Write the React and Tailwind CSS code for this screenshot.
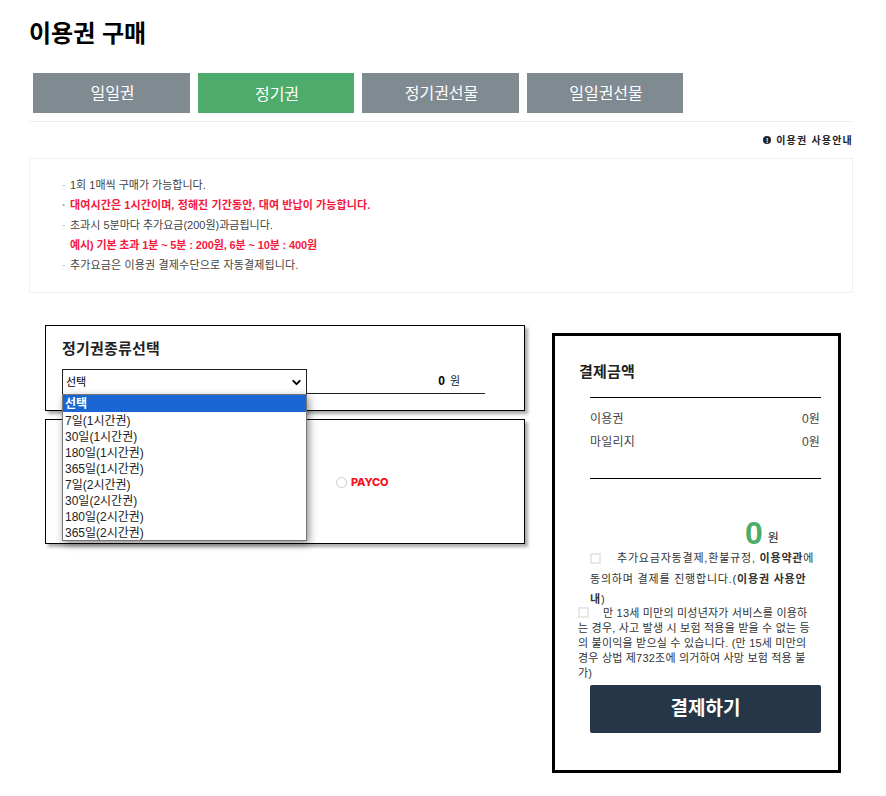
import React from "react";
import { ChevronDown } from "lucide-react";

const tabs = [
  { name: "일일권", w: "w-[157px]" },
  { name: "정기권", w: "w-[156px]", active: true },
  { name: "정기권선물", w: "w-[157px]" },
  { name: "일일권선물", w: "w-[156px]" },
];

const options = [
  "7일(1시간권)",
  "30일(1시간권)",
  "180일(1시간권)",
  "365일(1시간권)",
  "7일(2시간권)",
  "30일(2시간권)",
  "180일(2시간권)",
  "365일(2시간권)",
];

const App = () => {
  return (
    <div className="w-[886px] h-[796px] bg-white overflow-hidden pl-[29px] pr-[33px] font-['Liberation_Sans','Noto_Sans_CJK_KR',sans-serif] text-[#333]">
      {/* Title */}
      <h1 className="pt-[18px] h-[73px] text-[24px] leading-[32px] font-bold text-black">이용권 구매</h1>

      {/* Tabs */}
      <div className="flex gap-2 pl-1 h-[48px] border-b border-[#eee] box-content">
        {tabs.map(tab => (
          <div
            key={tab.name}
            className={`${tab.w} h-10 pl-[2px] flex items-center justify-center text-[16px] text-white ${
              tab.active ? "bg-[#4dab6b] pt-[4px]" : "bg-[#808a91] pt-[2px]"
            }`}
          >
            {tab.name}
          </div>
        ))}
      </div>

      {/* Guide link */}
      <div className="h-[36px] flex items-center justify-end gap-[5px] text-[10px] font-bold text-[#222] tracking-[1.2px]">
        <span className="w-2 h-2 rounded-full bg-[#222] flex items-center justify-center text-white text-[7px] leading-none tracking-normal">!</span>
        이용권 사용안내
      </div>

      {/* Notice */}
      <div className="h-[135px] border border-[#f0f0f0] pt-4 pl-[32px] text-[11px] leading-[20px] text-[#444]">
        <p className="h-5"><span className="inline-block w-2 text-[#999]">·</span>1회 1매씩 구매가 가능합니다.</p>
        <p className="h-5 font-bold tracking-[0.1px] text-[#f5173c]"><span className="inline-block w-2 text-[#999]">·</span>대여시간은 1시간이며, 정해진 기간동안, 대여 반납이 가능합니다.</p>
        <p className="h-5"><span className="inline-block w-2 text-[#999]">·</span>초과시 5분마다 추가요금(200원)과금됩니다.</p>
        <p className="h-5 pl-2 font-bold tracking-[-0.13px] text-[#f5173c]">예시) 기본 초과 1분 ~ 5분 : 200원, 6분 ~ 10분 : 400원</p>
        <p className="h-5 tracking-[0.15px]"><span className="inline-block w-2 text-[#999]">·</span>추가요금은 이용권 결제수단으로 자동결제됩니다.</p>
      </div>

      <div className="flex items-start">
        {/* Left column */}
        <div className="relative w-[480px] ml-4 mt-8 shrink-0">
          <div className="h-[86px] border border-black shadow-[3px_3px_3px_#aaa] pt-[13px] pl-4">
            <h2 className="text-[15px] leading-5 font-bold tracking-[0.2px] text-[#222]">정기권종류선택</h2>
            <div className="flex items-start mt-[10px]">
              <div className="w-[245px] h-[26px] border border-[#222] flex items-center justify-between pl-[3px] pr-[3px] text-[11px] text-black">
                선택
                <ChevronDown className="w-[13px] h-[13px]" strokeWidth={3.5} color="#000" />
              </div>
              <div className="w-[178px] h-[25px] border-b border-[#222] flex items-center justify-end pr-[25px] gap-[5px] text-[11px] text-[#222]">
                <b className="text-[12px] text-black">0</b> 원
              </div>
            </div>
          </div>

          <div className="h-[125px] mt-2 border border-black shadow-[3px_3px_3px_#aaa] flex items-center pl-[290px] pt-[2px]">
            <span className="w-[11px] h-[11px] rounded-full border border-[#ccc] mr-1" />
            <span className="font-['Inter',sans-serif] text-[11px] font-extrabold tracking-[-0.2px] text-[#f5141e]">PAYCO</span>
          </div>

          {/* Open select list */}
          <div className="absolute left-[17px] top-[69px] w-[245px] h-[147px] bg-white border border-[#767676] shadow-[2px_3px_8px_rgba(0,0,0,0.45)] text-[12px] leading-[16px] text-[#222]">
            <div className="h-[17px] pl-[2px] pt-px bg-[#1a66d4] text-white font-bold">선택</div>
            {options.map(opt => (
              <div key={opt} className="h-4 pl-[2px] pt-px whitespace-nowrap">{opt}</div>
            ))}
          </div>
        </div>

        {/* Payment box */}
        <div className="w-[289px] h-[440px] ml-[27px] mt-10 border-[3px] border-black shrink-0 pl-[24px] pr-[17px] pt-[26px] text-[#444]">
          <h2 className="text-[15px] leading-5 font-bold tracking-[0.2px] text-[#222]">결제금액</h2>
          <div className="ml-[11px] mt-[15px] h-[81px] border-t border-black pt-[11px] text-[12px] tracking-[0.2px]">
            <div className="flex justify-between h-[23px] leading-[20px]"><span>이용권</span><span className="pr-px">0원</span></div>
            <div className="flex justify-between h-[23px] leading-[20px]"><span>마일리지</span><span className="pr-px">0원</span></div>
          </div>
          <div className="ml-[11px] border-t border-black h-[72px] flex items-end pl-[155px] gap-[5px]">
            <b className="text-[32px] leading-[34px] text-[#4dab6b]">0</b>
            <span className="text-[12px] leading-[20px] mb-[2px] text-[#222]">원</span>
          </div>
          <div className="relative ml-[11px] mr-[5px] -mt-[2px] h-[58px] text-[11px] leading-[20.5px] text-[#333] tracking-[0.8px]">
            <span className="absolute left-0 top-[5px] w-[11px] h-[11px] border-2 border-[#e8e8e8]" />
            <p className="indent-[27px]">추가요금자동결제,환불규정, <b>이용약관</b>에 동의하며 결제를 진행합니다.(<b>이용권 사용안내</b>)</p>
          </div>
          <div className="relative -ml-px mr-[9px] h-[79px] text-[11px] leading-[15px] text-[#333] tracking-[0.2px]">
            <span className="absolute left-0 top-[1px] w-[11px] h-[11px] border-2 border-[#e8e8e8]" />
            <p className="indent-[25px]">만 13세 미만의 미성년자가 서비스를 이용하는 경우, 사고 발생 시 보험 적용을 받을 수 없는 등의 불이익을 받으실 수 있습니다. (만 15세 미만의 경우 상법 제732조에 의거하여 사망 보험 적용 불가)</p>
          </div>
          <div className="ml-[11px] h-12 rounded-[2px] bg-[#243647] flex items-center justify-center text-[19px] font-bold text-white">결제하기</div>
        </div>
      </div>
    </div>
  );
};

export default App;
